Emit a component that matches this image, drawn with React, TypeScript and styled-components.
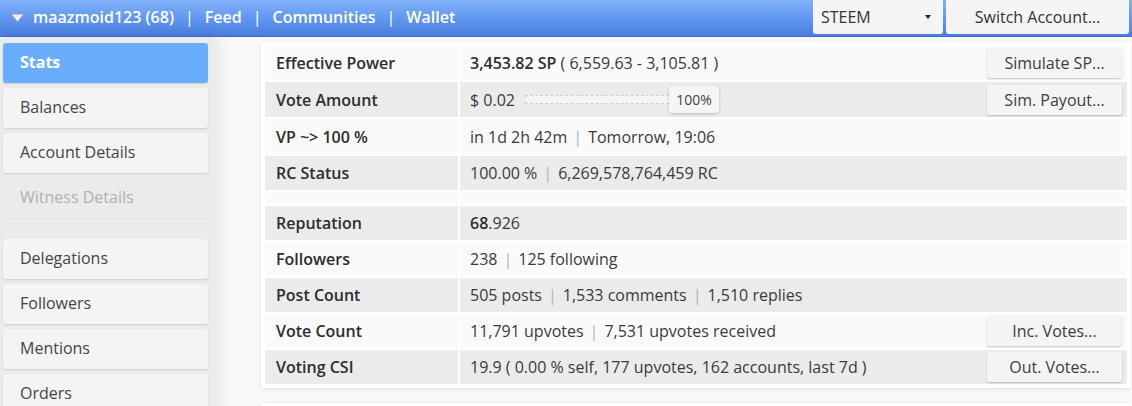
import React from "react";
import styled, { createGlobalStyle } from "styled-components";

const GlobalStyle = createGlobalStyle`
  html, body {
    margin: 0;
    padding: 0;
    background: #f8f8f8;
    font-family: "Open Sans", "Noto Sans", sans-serif;
    color: #333;
  }
`;

const Header = styled.div`
  height: 37px;
  display: flex;
  align-items: flex-start;
  background: linear-gradient(to bottom, #80b3fb 0%, #5f95ee 55%, #4a7ddf 100%);
  border-bottom: 1px solid #3c6cc9;
  padding-right: 3px;
  box-sizing: border-box;
`;

const Nav = styled.div`
  flex: 1;
  display: flex;
  align-items: center;
  height: 33px;
  padding-left: 10px;
  color: #fff;
  font-size: 16px;
  font-weight: 600;
`;

const Caret = styled.svg`
  width: 15px;
  height: 10px;
  margin-right: 8px;
  margin-top: 2px;
`;

const NavLink = styled.span`
  color: #fff;
  white-space: nowrap;
`;

const NavSep = styled.span`
  margin: 0 11px;
  font-weight: 400;
`;

const Select = styled.div`
  width: 130px;
  height: 34px;
  box-sizing: border-box;
  background: #f5f5f5;
  border-radius: 0 0 3px 3px;
  display: flex;
  align-items: center;
  justify-content: space-between;
  padding: 0 12px 0 8px;
  font-size: 16px;
  color: #333;
  margin-right: 3px;
`;

const TinyCaret = styled.span`
  width: 0;
  height: 0;
  border-left: 3px solid transparent;
  border-right: 3px solid transparent;
  border-top: 4px solid #222;
`;

const HeaderButton = styled.div`
  width: 183px;
  height: 34px;
  box-sizing: border-box;
  background: #f5f5f5;
  border-radius: 0 0 3px 3px;
  display: flex;
  align-items: center;
  justify-content: center;
  font-size: 16px;
  color: #333;
`;

const Body = styled.div`
  display: flex;
  align-items: flex-start;
`;

const Sidebar = styled.div`
  width: 205px;
  padding: 5px 7px 40px 3px;
  margin-top: 1px;
  background: #ebebeb;
  box-shadow: 3px 0 14px rgba(0, 0, 0, 0.09);
  min-height: 400px;
`;

const SideItem = styled.div<{ $active?: boolean; $disabled?: boolean; $gapAfter?: boolean }>`
  height: 40px;
  box-sizing: border-box;
  display: flex;
  align-items: center;
  padding-left: 17px;
  padding-bottom: 2px;
  margin-bottom: ${(p) => (p.$gapAfter ? "21px" : "5px")};
  border-radius: 3px;
  font-size: 16px;
  font-weight: ${(p) => (p.$active ? 700 : 400)};
  color: ${(p) => (p.$active ? "#fff" : p.$disabled ? "#b0b0b0" : "#444")};
  background: ${(p) => (p.$active ? "#69aefc" : p.$disabled ? "#ebebeb" : "#f4f4f4")};
  box-shadow: ${(p) => (p.$disabled ? "0 1px 2px rgba(0,0,0,0.05)" : "0 1px 2px rgba(0, 0, 0, 0.13)")};
`;

const Main = styled.div`
  flex: 1;
  padding: 5px 1px 0 46px;
`;

const Panel = styled.div`
  background: #fff;
  padding: 4px;
  display: flex;
  flex-direction: column;
  gap: 2px;
  box-shadow: 0 1px 4px rgba(0, 0, 0, 0.1);
  margin-bottom: 15px;
`;

const Row = styled.div<{ $shade?: boolean; $height?: number }>`
  display: grid;
  grid-template-columns: 193px 1fr;
  column-gap: 2px;
  height: ${(p) => p.$height ?? 34}px;

  & > div {
    background: ${(p) => (p.$shade ? "#ebebeb" : "#fafafa")};
    display: flex;
    align-items: center;
  }
`;

const Label = styled.div`
  padding-left: 11px;
  font-size: 16px;
  font-weight: 600;
  color: #2d2d2d;
`;

const Value = styled.div`
  padding-left: 10px;
  padding-right: 5px;
  font-size: 16px;
  color: #3a3a3a;
  white-space: nowrap;
`;

const Strong = styled.b`
  font-weight: 600;
  color: #2d2d2d;
`;

const Sep = styled.span`
  color: #9fb6d2;
  margin: 0 6px;
`;

const Spacer = styled.span`
  flex: 1;
`;

const ActionButton = styled.div`
  width: 135px;
  height: 30px;
  box-sizing: border-box;
  display: flex;
  align-items: center;
  justify-content: center;
  background: #f4f4f4;
  border-radius: 3px;
  box-shadow: 0 1px 2px rgba(0, 0, 0, 0.22);
  font-size: 16px;
  color: #3c3c3c;
`;

const SliderTrack = styled.div`
  width: 144px;
  height: 9px;
  margin-left: 10px;
  background: #f5f5f5;
  border: 1px dashed #cfcfcf;
  border-right: none;
  box-sizing: border-box;
`;

const SliderThumb = styled.div`
  width: 50px;
  height: 27px;
  display: flex;
  align-items: center;
  justify-content: center;
  background: #f5f5f5;
  border-radius: 3px;
  box-shadow: 0 1px 3px rgba(0, 0, 0, 0.2);
  font-size: 14px;
  color: #444;
`;

const sideItems = [
  { name: "Stats", active: true },
  { name: "Balances" },
  { name: "Account Details" },
  { name: "Witness Details", disabled: true, gapAfter: true },
  { name: "Delegations" },
  { name: "Followers" },
  { name: "Mentions" },
  { name: "Orders" },
];

export default function App() {
  return (
    <>
      <GlobalStyle />
      <Header>
        <Nav>
          <Caret viewBox="0 0 15 10">
            <path d="M1 1 L14 1 L7.5 9 Z" fill="#eeeeee" stroke="#8f9aa8" strokeWidth="1" strokeLinejoin="round" />
          </Caret>
          <NavLink>maazmoid123 (68)</NavLink>
          <NavSep>|</NavSep>
          <NavLink>Feed</NavLink>
          <NavSep>|</NavSep>
          <NavLink>Communities</NavLink>
          <NavSep>|</NavSep>
          <NavLink>Wallet</NavLink>
        </Nav>
        <Select>
          STEEM
          <TinyCaret />
        </Select>
        <HeaderButton>Switch Account...</HeaderButton>
      </Header>
      <Body>
        <Sidebar>
          {sideItems.map((it) => (
            <SideItem key={it.name} $active={it.active} $disabled={it.disabled} $gapAfter={it.gapAfter}>
              {it.name}
            </SideItem>
          ))}
        </Sidebar>
        <Main>
          <Panel>
            <Row>
              <Label>Effective Power</Label>
              <Value>
                <Strong>3,453.82 SP</Strong>&nbsp;( 6,559.63 - 3,105.81 )
                <Spacer />
                <ActionButton>Simulate SP...</ActionButton>
              </Value>
            </Row>
            <Row $shade $height={35}>
              <Label>Vote Amount</Label>
              <Value>
                $ 0.02
                <SliderTrack />
                <SliderThumb>100%</SliderThumb>
                <Spacer />
                <ActionButton>Sim. Payout...</ActionButton>
              </Value>
            </Row>
            <Row $height={35}>
              <Label>VP ~&gt; 100 %</Label>
              <Value>
                in 1d 2h 42m<Sep>|</Sep>Tomorrow, 19:06
              </Value>
            </Row>
            <Row $shade>
              <Label>RC Status</Label>
              <Value>
                100.00 %<Sep>|</Sep>6,269,578,764,459 RC
              </Value>
            </Row>
            <Row $height={12}>
              <div />
              <div />
            </Row>
            <Row $shade>
              <Label>Reputation</Label>
              <Value>
                <Strong>68</Strong>.926
              </Value>
            </Row>
            <Row>
              <Label>Followers</Label>
              <Value>
                238<Sep>|</Sep>125 following
              </Value>
            </Row>
            <Row $shade>
              <Label>Post Count</Label>
              <Value>
                505 posts<Sep>|</Sep>1,533 comments<Sep>|</Sep>1,510 replies
              </Value>
            </Row>
            <Row>
              <Label>Vote Count</Label>
              <Value>
                11,791 upvotes<Sep>|</Sep>7,531 upvotes received
                <Spacer />
                <ActionButton>Inc. Votes...</ActionButton>
              </Value>
            </Row>
            <Row $shade>
              <Label>Voting CSI</Label>
              <Value>
                19.9 ( 0.00 % self, 177 upvotes, 162 accounts, last 7d )
                <Spacer />
                <ActionButton>Out. Votes...</ActionButton>
              </Value>
            </Row>
          </Panel>
          <Panel>
            <Row $shade>
              <div />
              <div />
            </Row>
          </Panel>
        </Main>
      </Body>
    </>
  );
}
